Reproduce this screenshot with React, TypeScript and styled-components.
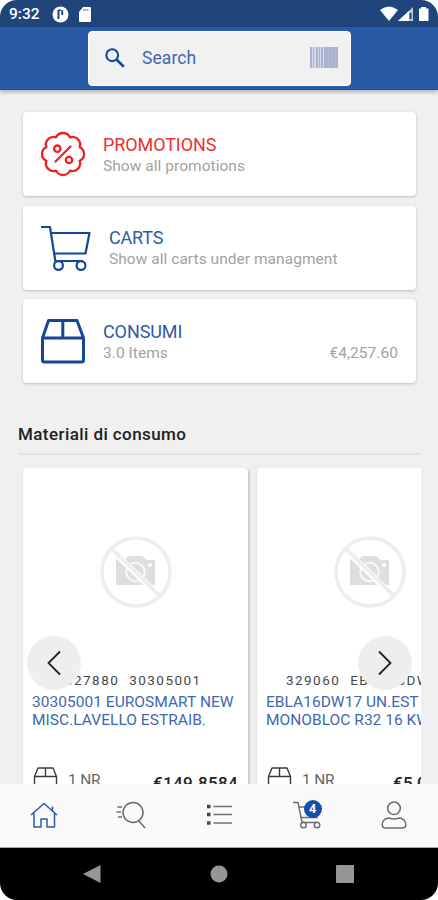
import React from 'react';
import styled, { createGlobalStyle } from 'styled-components';

const Global = createGlobalStyle`
  * { box-sizing: border-box; }
  body { margin: 0; background: #fff; font-family: Roboto, sans-serif; }
  svg { display: block; flex: none; }
`;

const Phone = styled.div`
  width: 438px;
  height: 900px;
  display: flex;
  flex-direction: column;
  overflow: hidden;
  border-radius: 17px;
  background: #f0f0f0;
`;

const StatusBar = styled.div`
  height: 27px;
  flex: none;
  display: flex;
  align-items: center;
  padding: 1px 8px 0 9px;
  background: #1f457b;
  color: #fff;
`;

const Clock = styled.span`
  width: 43px;
  font-size: 15.5px;
  font-weight: 500;
  line-height: 26px;
`;

const Spacer = styled.div`
  flex: 1;
`;

const AppBar = styled.header`
  height: 63px;
  flex: none;
  padding: 4px 87px 4px 88px;
  background: #285aa6;
  border-bottom: 1px solid #1d529d;
  box-shadow: 0 2px 4px rgba(0, 0, 0, 0.28);
  z-index: 1;
`;

const SearchBox = styled.div`
  height: 55px;
  display: flex;
  align-items: center;
  padding: 0 12px 2px 16px;
  border-radius: 4px;
  background: #f1f1f2;
  border: 1px solid #fff;
`;

const SearchLabel = styled.span`
  flex: 1;
  margin-left: 17px;
  font-size: 17.5px;
  line-height: 24px;
  letter-spacing: 0.1px;
  color: #4467ae;
`;

const Content = styled.main`
  flex: 1;
  min-height: 0;
  overflow: hidden;
  padding: 22px 17px 0 18px;
`;

const Menu = styled.div`
  display: flex;
  flex-direction: column;
  gap: 9.5px;
  padding: 0 5px;
`;

const MenuCard = styled.section`
  height: 84px;
  display: flex;
  align-items: center;
  padding: 0 18px 0 17px;
  border-radius: 4px;
  background: #fff;
  box-shadow: 0 1px 3px rgba(0, 0, 0, 0.22);
`;

const MenuText = styled.div`
  flex: 1;
  margin-left: 17px;
  padding-top: 3px;
`;

const MenuTitle = styled.div<{ $color: string; $spacing: number }>`
  font-size: 18px;
  line-height: 21px;
  letter-spacing: ${(p) => p.$spacing}px;
  color: ${(p) => p.$color};
`;

const MenuLine = styled.div`
  display: flex;
  justify-content: space-between;
  font-size: 15.5px;
  line-height: 23px;
  letter-spacing: 0.04px;
  color: #a2a2a2;
`;

const SectionTitle = styled.h2`
  height: 38px;
  margin: 34px 0 13px;
  padding-top: 5px;
  border-bottom: 2px solid #e2e2e2;
  font-size: 17px;
  font-weight: 500;
  line-height: 24px;
  letter-spacing: 0.42px;
  color: #202020;
`;

const Carousel = styled.div`
  position: relative;
  height: 340px;
  display: flex;
  gap: 9px;
  padding-left: 5px;
  overflow: hidden;
`;

const Product = styled.article`
  width: 225px;
  flex: none;
  padding: 0 9px;
  border-radius: 4px;
  background: #fff;
  box-shadow: 1px 1px 3px rgba(0, 0, 0, 0.25);
`;

const Photo = styled.div`
  height: 204px;
  display: flex;
  justify-content: center;
  padding-top: 67px;
`;

const Codes = styled.div<{ $indent: number }>`
  display: flex;
  gap: 10px;
  padding-left: ${(p) => p.$indent}px;
  font-size: 13.5px;
  line-height: 16px;
  letter-spacing: 1.45px;
  color: #484848;
  white-space: nowrap;
`;

const ProductName = styled.div`
  height: 65px;
  margin-top: 5px;
  font-size: 15.5px;
  line-height: 18px;
  letter-spacing: 0.03px;
  color: #4168ad;
  white-space: pre;
`;

const Stock = styled.div`
  display: flex;
  align-items: flex-start;
  padding: 8px 1px 0 1px;
`;

const Quantity = styled.span`
  flex: 1;
  margin-left: 10px;
  padding-top: 3px;
  font-size: 15.5px;
  line-height: 23px;
  letter-spacing: -0.2px;
  color: #666;
`;

const Price = styled.span`
  padding-top: 5px;
  font-size: 17px;
  font-weight: 500;
  line-height: 24px;
  letter-spacing: 0.32px;
  color: #222;
`;

const Arrow = styled.button<{ $left: number }>`
  position: absolute;
  top: 168px;
  left: ${(p) => p.$left}px;
  width: 54px;
  height: 54px;
  display: grid;
  place-items: center;
  padding: 0;
  border: 0;
  border-radius: 50%;
  background: #eeeeee;
`;

const TabBar = styled.nav`
  height: 64px;
  flex: none;
  display: grid;
  grid-template-columns: repeat(5, 1fr);
  align-items: center;
  justify-items: center;
  padding-bottom: 2px;
  background: #fafafa;
  border-bottom: 1px solid #a8a8a8;
`;

const Tab = styled.div`
  position: relative;
  width: 34px;
  height: 32px;
  display: grid;
  place-items: center;
`;

const Badge = styled.span`
  position: absolute;
  top: 1px;
  left: 14px;
  width: 18px;
  height: 18px;
  border-radius: 50%;
  background: #1350aa;
  color: #fff;
  font-size: 12.5px;
  font-weight: 700;
  line-height: 18px;
  text-align: center;
`;

const SystemBar = styled.div`
  height: 52px;
  flex: none;
  display: flex;
  align-items: center;
  justify-content: space-between;
  padding: 0 84px 0 83px;
  background: #000;
`;

const BLUE = '#144799';

const scallop = (() => {
  const point = (k: number) => {
    const a = ((22.5 + 45 * k) * Math.PI) / 180;
    return `${(23 + 18 * Math.cos(a)).toFixed(2)} ${(23 + 18 * Math.sin(a)).toFixed(2)}`;
  };
  let d = `M${point(0)}`;
  for (let k = 1; k <= 8; k++) d += `A7.6 7.6 0 0 1 ${point(k)}`;
  return d + 'Z';
})();

const PromoIcon = () => (
  <svg width="46" height="46" fill="none" stroke="#ee2222" strokeWidth="2.3" strokeLinejoin="round" strokeLinecap="round">
    <path d={scallop} />
    <path d="M15.5 30.5 30.5 15.5" />
    <circle cx="17.3" cy="17.7" r="3.2" />
    <circle cx="29" cy="29" r="3.2" />
  </svg>
);

const CartIcon = () => (
  <svg width="52" height="48" fill="none" stroke={BLUE} strokeWidth="2.2" strokeLinejoin="round">
    <path d="M1 3H10L15.5 38M11.5 9H49.5L45.5 29.5H14M15 37H43" />
    <circle cx="18.5" cy="41.5" r="4.4" />
    <circle cx="41" cy="41.5" r="4.4" />
  </svg>
);

const BoxIcon = () => (
  <svg width="46" height="46" fill="none" stroke={BLUE} strokeWidth="3" strokeLinejoin="round">
    <path d="M2.5 20 8.5 2.5H37L43.5 20V42a2 2 0 0 1-2 2h-37a2 2 0 0 1-2-2ZM2.5 20H43.5M22.8 3V20" />
  </svg>
);

const SmallBox = () => (
  <svg width="25" height="25" fill="none" stroke="#3c3c3c" strokeWidth="1.4" strokeLinejoin="round">
    <path d="M1.5 10.5 5 2H20L23.5 10.5V24H1.5ZM1.5 10.5H23.5M12.5 2V10.5" />
  </svg>
);

const NoPhoto = () => (
  <svg width="74" height="74" fill="none">
    <path fill="#dedede" d="M17 24H26L30 21H43L48 25H56V50H17Z" />
    <circle cx="36.5" cy="37" r="9.3" fill="#dedede" stroke="#f8f8f8" strokeWidth="2" />
    <circle cx="51" cy="30" r="2" fill="#fff" />
    <path d="M12 14 61 62" stroke="#fff" strokeWidth="6" />
    <path d="M12 13 61 61" stroke="#ededed" strokeWidth="3.5" />
    <circle cx="37" cy="37" r="34" stroke="#eeeeee" strokeWidth="3.5" />
  </svg>
);

const BARS = [
  [0, 2], [3, 1], [6, 2], [9, 1], [11, 2], [14, 14],
];

const Barcode = () => (
  <svg width="28" height="21">
    <rect width="28" height="21" fill="#d5daea" />
    {BARS.map(([x, w]) => <rect key={x} x={x} width={w} height="21" fill="#a9b3d0" />)}
    <path d="M18.5 0V21M22.5 0V21M25.5 0V21" stroke="#b3bcd6" />
  </svg>
);

const StatusIcons = () => (
  <svg width="50" height="18" fill="#fff">
    <path d="M0 5Q9-2 18 5L9 16Z" />
    <path d="M33 2V16H18Z" opacity=".7" />
    <path d="M29 6V16H18Z" />
    <path d="M30.5 8V14" stroke="#1f457b" strokeWidth="2" />
    <path d="M39 3.5h2V2h5v1.5h2.5V16H39Z" />
  </svg>
);

const products = [
  { indent: 33, codes: ['327880', '30305001'], name: '30305001 EUROSMART NEW\nMISC.LAVELLO ESTRAIB.', price: '€149.8584' },
  { indent: 20, codes: ['329060', 'EBLA16DW17'], name: 'EBLA16DW17 UN.EST\nMONOBLOC R32 16 KW', price: '€5,074.00' },
];

export default function App() {
  return (
    <>
      <Global />
      <Phone>
        <StatusBar>
          <Clock>9:32</Clock>
          <svg width="17" height="17">
            <circle cx="8.5" cy="8.5" r="8" fill="#fff" />
            <path d="M6.5 4V13M10.2 4.3V9" stroke="#1f457b" strokeWidth="2" />
            <path d="M6 4.2H9" stroke="#1f457b" strokeWidth="1.4" />
          </svg>
          <svg width="24" height="17">
            <path d="M14 1h7a1 1 0 0 1 1 1V15a1 1 0 0 1-1 1H11a1 1 0 0 1-1-1V6Z" fill="#fff" />
            <path d="M14.2 4H19.5" stroke="#8298b8" strokeWidth="2" strokeDasharray="1.2 .8" />
          </svg>
          <Spacer />
          <StatusIcons />
        </StatusBar>
        <AppBar>
          <SearchBox>
            <svg width="20" height="20" fill="none" stroke={BLUE} strokeWidth="2.1">
              <circle cx="7.2" cy="7.2" r="5.9" />
              <path d="m11.4 11.4 7.4 7.4" strokeWidth="2.7" />
            </svg>
            <SearchLabel>Search</SearchLabel>
            <Barcode />
          </SearchBox>
        </AppBar>
        <Content>
          <Menu>
            <MenuCard>
              <PromoIcon />
              <MenuText>
                <MenuTitle $color="#ee3030" $spacing={-0.1}>PROMOTIONS</MenuTitle>
                <MenuLine>Show all promotions</MenuLine>
              </MenuText>
            </MenuCard>
            <MenuCard>
              <CartIcon />
              <MenuText>
                <MenuTitle $color="#3159a5" $spacing={-0.2}>CARTS</MenuTitle>
                <MenuLine>Show all carts under managment</MenuLine>
              </MenuText>
            </MenuCard>
            <MenuCard>
              <BoxIcon />
              <MenuText>
                <MenuTitle $color="#3159a5" $spacing={-0.1}>CONSUMI</MenuTitle>
                <MenuLine>
                  <span>3.0 Items</span>
                  <span>€4,257.60</span>
                </MenuLine>
              </MenuText>
            </MenuCard>
          </Menu>
          <SectionTitle>Materiali di consumo</SectionTitle>
          <Carousel>
            {products.map((p) => (
              <Product key={p.codes[0]}>
                <Photo><NoPhoto /></Photo>
                <Codes $indent={p.indent}>
                  {p.codes.map((c) => <span key={c}>{c}</span>)}
                </Codes>
                <ProductName>{p.name}</ProductName>
                <Stock>
                  <SmallBox />
                  <Quantity>1 NR</Quantity>
                  <Price>{p.price}</Price>
                </Stock>
              </Product>
            ))}
            <Arrow $left={9} aria-label="Previous">
              <svg width="14" height="26" fill="none" stroke="#222" strokeWidth="1.8">
                <path d="M13 1.5 1.5 13 13 24.5" />
              </svg>
            </Arrow>
            <Arrow $left={340} aria-label="Next">
              <svg width="14" height="26" fill="none" stroke="#222" strokeWidth="1.8">
                <path d="M1 1.5 12.5 13 1 24.5" />
              </svg>
            </Arrow>
          </Carousel>
        </Content>
        <TabBar>
          <Tab>
            <svg width="28" height="28" fill="none" stroke="#3158a8" strokeWidth="1.5" strokeLinejoin="round">
              <path d="M1 14 14 2.5 27 14M22.5 5.5V10M4 12V26H11V18H17V26H24.5V12" />
            </svg>
          </Tab>
          <Tab>
            <svg width="30" height="28" fill="none" stroke="#6d6d6d" strokeWidth="1.5">
              <circle cx="17" cy="11.5" r="10" />
              <path d="m23 20 6 7M1.5 6H6M.5 11H5M2 16H6" />
            </svg>
          </Tab>
          <Tab>
            <svg width="28" height="24" fill="none" stroke="#707070" strokeWidth="1.5">
              <path d="M8.5 3.5H27M8.5 11.5H27M8.5 20H27" />
              <path d="M2 3.5H5.5M2 11.5H5.5M2 20H5.5" stroke="#444" strokeWidth="3.5" />
            </svg>
          </Tab>
          <Tab>
            <svg width="30" height="28" fill="none" stroke="#6d6d6d" strokeWidth="1.4">
              <path d="M1 1.5H6L10 21.5M7 6H27L25 16.5H9M9.5 21.5H25" />
              <circle cx="11.5" cy="24" r="2.8" />
              <circle cx="25" cy="24" r="2.8" />
            </svg>
            <Badge>4</Badge>
          </Tab>
          <Tab>
            <svg width="26" height="28" fill="none" stroke="#6e6e6e" strokeWidth="1.5">
              <circle cx="13" cy="7.3" r="6.3" />
              <path d="M8 17Q13 19 18 17C22 17 24.8 20 24.8 24Q24.8 27 21.5 27H4.5Q1.2 27 1.2 24C1.2 20 4 17 8 17Z" />
            </svg>
          </Tab>
        </TabBar>
        <SystemBar>
          <svg width="18" height="18"><path d="M0 9 17.5 0V18Z" fill="#969696" /></svg>
          <svg width="18" height="18"><circle cx="9" cy="9" r="8.5" fill="#969696" /></svg>
          <svg width="18" height="18"><rect width="18" height="18" rx="1" fill="#969696" /></svg>
        </SystemBar>
      </Phone>
    </>
  );
}
